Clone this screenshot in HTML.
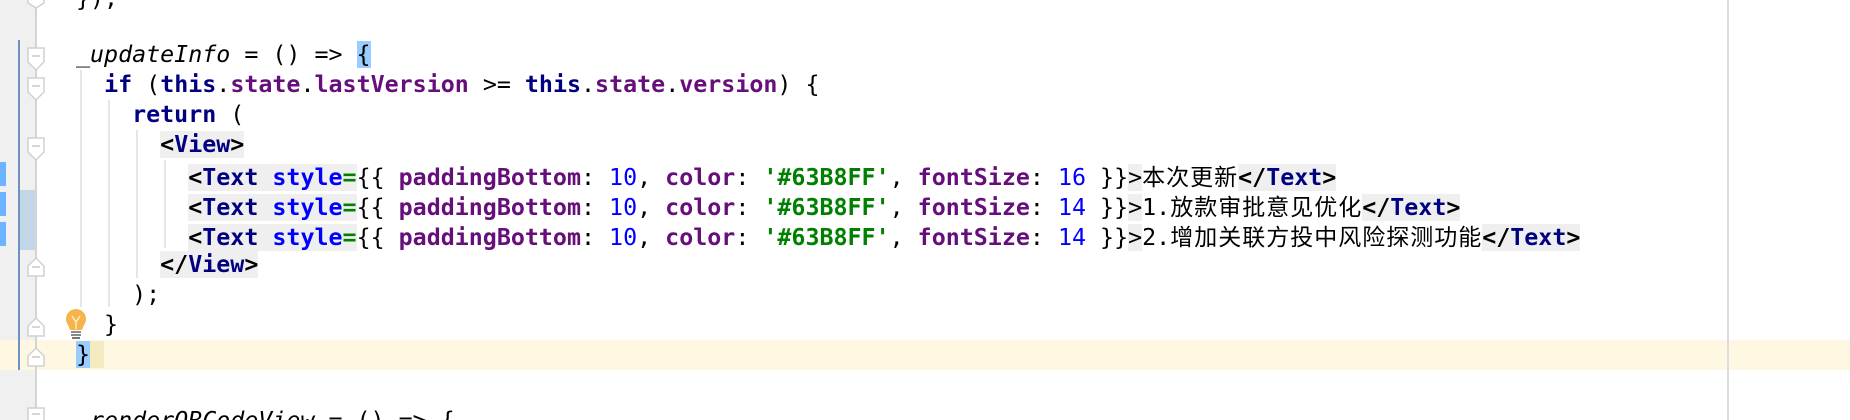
<!DOCTYPE html>
<html style="height:420px;overflow:hidden"><head><meta charset="utf-8"><style>
html,body{margin:0;padding:0}
body{width:1850px;height:420px;background:#fff;position:relative;overflow:hidden;font-family:"DejaVu Sans Mono","Liberation Mono","Noto Sans CJK SC",monospace;font-size:23.3px;color:#000}
.a{position:absolute}
.row{position:absolute;left:76px;height:30px;line-height:30px;white-space:pre}
.n{color:#000080;font-weight:bold}
.p{color:#660e7a;font-weight:bold}
.b{color:#0000ff}
.bb{color:#0000ff;font-weight:bold}
.g{color:#008000;font-weight:bold}
.k{font-weight:bold}
.t{background:#efefef}
.c{font-family:"Noto Sans CJK SC","WenQuanYi Zen Hei",sans-serif;font-size:23px;letter-spacing:1px}
.ig{position:absolute;width:2px;background:#e6e6e6}
</style></head><body>
<div class="a" style="left:0;top:0;width:36px;height:420px;background:#f0f0f0"></div>
<div class="a" style="left:0;top:340px;width:1850px;height:30px;background:#fef8e2"></div>
<div class="a" style="left:1727px;top:0;width:2px;height:420px;background:#dcdcdc"></div>
<div class="a" style="left:18px;top:40px;width:2px;height:330px;background:#7192bf"></div>
<div class="a" style="left:20px;top:190px;width:15px;height:60px;background:#c3d6e8"></div>
<div class="a" style="left:0;top:162px;width:6px;height:24px;background:#6cb4ff"></div>
<div class="a" style="left:0;top:192px;width:6px;height:24px;background:#6cb4ff"></div>
<div class="a" style="left:0;top:222px;width:6px;height:24px;background:#6cb4ff"></div>
<div class="a" style="left:35px;top:0;width:2px;height:420px;background:#d4d4d4"></div>
<svg class="a" style="left:0;top:0" width="100" height="420">
<g fill="#fff" stroke="#d0d0d0" stroke-width="1.5">
<path d="M28,-8 H44 V3 L36,8 L28,3 Z"/>
<path d="M28,48 H44 V62 L36,70 L28,62 Z"/>
<path d="M28,78 H44 V92 L36,100 L28,92 Z"/>
<path d="M28,138 H44 V152 L36,160 L28,152 Z"/>
<path d="M28,276 V266 L36,258 L44,266 V276 Z"/>
<path d="M28,336 V326 L36,318 L44,326 V336 Z"/>
<path d="M28,366 V356 L36,348 L44,356 V366 Z"/>
<path d="M28,408 V428 H44 V408 Z"/>
</g>
<g stroke="#c8c8c8" stroke-width="1.5">
<line x1="32" y1="-2" x2="40" y2="-2"/><line x1="32" y1="56" x2="40" y2="56"/><line x1="32" y1="86" x2="40" y2="86"/><line x1="32" y1="146" x2="40" y2="146"/>
<line x1="32" y1="267" x2="40" y2="267"/><line x1="32" y1="327" x2="40" y2="327"/><line x1="32" y1="357" x2="40" y2="357"/><line x1="32" y1="414" x2="40" y2="414"/>
</g>
<circle cx="76" cy="319" r="10" fill="#f7b44a"/>
<path d="M67,322 Q76,334 85,322 L82,330 H70 Z" fill="#f7b44a"/>
<path d="M72,316 L76,322 L80,316 M76,322 V329" stroke="#fff0c8" stroke-width="1.4" fill="none"/>
<rect x="71" y="331" width="10" height="2" fill="#8a8a8a"/><rect x="71" y="334" width="10" height="2" fill="#8a8a8a"/><rect x="72" y="337" width="8" height="2" fill="#777"/>
</svg>
<div class="ig" style="left:80px;top:70px;height:237px"></div>
<div class="ig" style="left:108px;top:100px;height:207px"></div>
<div class="ig" style="left:136px;top:130px;height:148px"></div>
<div class="ig" style="left:164px;top:160px;height:88px"></div>

<div class="row" style="top:-16px">});</div>
<div class="row" style="top:40px"><i>_updateInfo</i> = () =&gt; <span style="background:#99ccff">{</span></div>
<div class="row" style="top:70px">  <span class="n">if</span> (<span class="n">this</span>.<span class="p">state</span>.<span class="p">lastVersion</span> &gt;= <span class="n">this</span>.<span class="p">state</span>.<span class="p">version</span>) {</div>
<div class="row" style="top:100px">    <span class="n">return</span> (</div>
<div class="row" style="top:130px">      <span class="t k">&lt;<span class="n">View</span>&gt;</span></div>
<div class="row" style="top:160px">        <span class="t k">&lt;<span class="n">Text</span> <span class="bb">style</span><span class="g">=</span></span>{{ <span class="p">paddingBottom</span>: <span class="b">10</span>, <span class="p">color</span>: <span class="g">'#63B8FF'</span>, <span class="p">fontSize</span>: <span class="b">16</span> }}<span class="t">&gt;</span><span class="c">本次更新</span><span class="t k">&lt;/<span class="n">Text</span>&gt;</span></div>
<div class="row" style="top:190px">        <span class="t k">&lt;<span class="n">Text</span> <span class="bb">style</span><span class="g">=</span></span>{{ <span class="p">paddingBottom</span>: <span class="b">10</span>, <span class="p">color</span>: <span class="g">'#63B8FF'</span>, <span class="p">fontSize</span>: <span class="b">14</span> }}<span class="t">&gt;</span>1.<span class="c">放款审批意见优化</span><span class="t k">&lt;/<span class="n">Text</span>&gt;</span></div>
<div class="row" style="top:220px">        <span class="t k">&lt;<span class="n">Text</span> <span class="bb">style</span><span class="g">=</span></span>{{ <span class="p">paddingBottom</span>: <span class="b">10</span>, <span class="p">color</span>: <span class="g">'#63B8FF'</span>, <span class="p">fontSize</span>: <span class="b">14</span> }}<span class="t">&gt;</span>2.<span class="c">增加关联方投中风险探测功能</span><span class="t k">&lt;/<span class="n">Text</span>&gt;</span></div>
<div class="row" style="top:250px">      <span class="t k">&lt;/<span class="n">View</span>&gt;</span></div>
<div class="row" style="top:280px">    );</div>
<div class="row" style="top:310px">  }</div>
<div class="row" style="top:340px"><span style="background:#99ccff">}</span><span style="background:#f5ebc0"> </span></div>
<div class="row" style="top:406px"><i>_renderQRCodeView</i> = () =&gt; {</div>
</body></html>
